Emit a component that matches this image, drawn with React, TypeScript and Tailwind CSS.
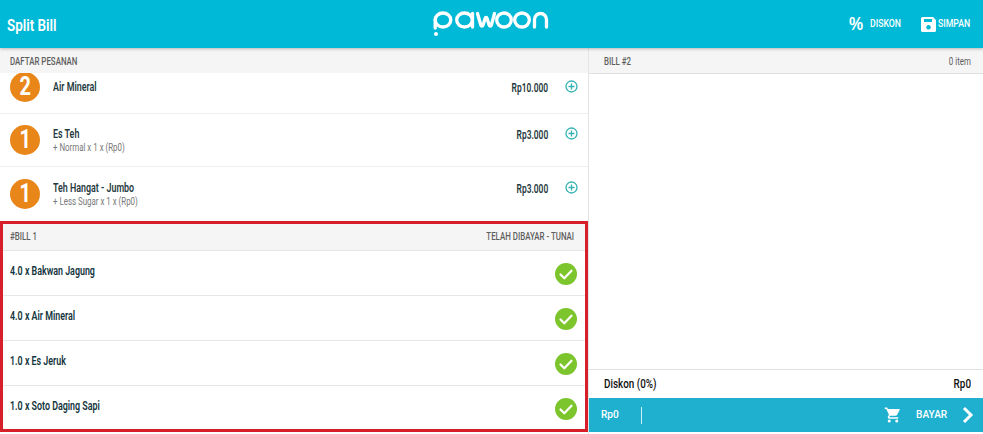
const font = "font-['Roboto',sans-serif]";
const sl = `${font} inline-block whitespace-nowrap origin-left scale-x-[0.79]`;
const sr = `${font} inline-block whitespace-nowrap origin-right scale-x-[0.79]`;
const bl = `${font} inline-block whitespace-nowrap origin-left scale-x-[0.74]`;
const br = `${font} inline-block whitespace-nowrap origin-right scale-x-[0.7]`;
const ul = `${font} inline-block whitespace-nowrap origin-left scale-x-[0.88]`;

function Logo() {
  return (
    <svg width="118" height="28" viewBox="0 0 118 28" fill="none" stroke="white" strokeWidth="3.3" strokeLinecap="round" strokeLinejoin="round" className="block ml-[7px]">
      <ellipse cx="10" cy="10" rx="7.8" ry="7" />
      <path d="M2.2 10v8" />
      <circle cx="3" cy="24" r="2" fill="white" stroke="none" />
      <ellipse cx="31.500" cy="10" rx="7.800" ry="7" />
      <path d="M39.500 3.500V17" />
      <path d="M44.500 3.500l3.300 11.500c.4 1.600 1.800 1.600 2.300 0l2-6.500c.4-1.400 1.600-1.400 2 0l2 6.500c.5 1.600 1.900 1.600 2.300 0L61.500 3.500" />
      <ellipse cx="71" cy="10" rx="7.300" ry="7" />
      <ellipse cx="89" cy="10" rx="7.300" ry="7" />
      <path d="M101.500 17V9.500a6 6 0 0 1 12 0V17" />
    </svg>
  );
}

function Plus() {
  return (
    <svg width="13" height="13" viewBox="0 0 13 13" fill="none" stroke="#35b3b3" strokeWidth="1.300" className="block">
      <circle cx="6.500" cy="6.500" r="5.500" />
      <path d="M6.500 3.500v6M3.500 6.500h6" />
    </svg>
  );
}

function Check() {
  return (
    <svg width="22" height="22" viewBox="0 0 22 22" fill="none" className="block mt-[2px]">
      <circle cx="11" cy="11" r="11" fill="#7cc52d" />
      <path d="M5.500 11.500l3.800 3.800 7.200-7.600" stroke="white" strokeWidth="2.200" strokeLinecap="round" strokeLinejoin="round" />
    </svg>
  );
}

function Order({ qty, name, note, price, h }: { qty: number; name: string; note?: string; price: string; h: string }) {
  return (
    <div className={`flex items-center pl-[10px] pr-[10px] border-b border-[#eeeeee] ${h}`}>
      <div className="w-[30px] h-[30px] rounded-full bg-[#e8861a] text-white flex items-center justify-center text-[25px] font-bold">
        <span className={`${font} inline-block scale-x-[0.8]`}>{qty}</span>
      </div>
      <div className="ml-[13px] flex-1">
        <div className="h-[13px] text-[12px] leading-[13px] font-semibold text-[#1f3a40]"><span className={bl}>{name}</span></div>
        {note && <div className="h-[13px] text-[10px] leading-[13px] mt-[1px] text-[#777777]"><span className={sl}>{note}</span></div>}
      </div>
      <div className={`flex items-center ${note ? "-mt-[14px]" : ""}`}>
        <span className={`${br} text-[12px] font-semibold text-[#1f3a40] mt-[3px]`}>{price}</span>
        <div className="ml-[17px]"><Plus /></div>
      </div>
    </div>
  );
}

function Paid({ text, h }: { text: string; h: string }) {
  return (
    <div className={`flex items-center justify-between pl-[7px] pr-[8px] border-b border-[#e6e6e6] last:border-b-0 ${h}`}>
      <span className={`${bl} text-[12px] font-semibold text-[#12343c] -mt-[4px]`}>{text}</span>
      <Check />
    </div>
  );
}

export default function App() {
  return (
    <div className="w-[983px] h-[434px] bg-white overflow-hidden flex flex-col">
      <header className="h-[48px] shrink-0 bg-[#00b9d6] shadow-[0_1px_3px_rgba(0,0,0,0.25)] relative z-10 flex items-center justify-between pl-[7px] pr-[14px]">
        <div className="w-[200px] text-white text-[17px] font-semibold mt-[2px]"><span className={`${sl} scale-x-[0.76]`}>Split Bill</span></div>
        <Logo />
        <div className="w-[200px] flex items-center justify-end text-white">
          <span className="w-[21px] text-[18px] leading-none font-bold font-['Liberation_Sans',sans-serif]"><span className="inline-block origin-left scale-x-[0.88]">%</span></span>
          <span className={`${sl} w-[51px] text-[11px] font-medium`}>DISKON</span>
          <svg width="15" height="15" viewBox="0 0 15 15" className="mr-[2px] block">
            <path fillRule="evenodd" fill="white" d="M1.500 0H12l3 3v10.500a1.500 1.500 0 0 1-1.500 1.500h-12A1.500 1.500 0 0 1 0 13.500v-12A1.500 1.500 0 0 1 1.500 0zM3 2v3h8V2zM7.500 8a2.300 2.300 0 1 0 .01 0z" />
          </svg>
          <span className={`${sl} w-[31px] text-[11px] font-medium`}>SIMPAN</span>
        </div>
      </header>
      <main className="flex flex-1 min-h-0">
        <section className="w-[589px] shrink-0 border-r border-[#e5e5e5] flex flex-col">
          <div className="h-[25px] shrink-0 bg-[#f5f5f5] flex items-center pl-[10px] pt-[2px] text-[10px] font-medium text-[#5e5e5e]"><span className={sl}>DAFTAR PESANAN</span></div>
          <div className="h-[148px] shrink-0 overflow-hidden">
            <div className="-mt-[13px]">
              <Order qty={2} name="Air Mineral" price="Rp10.000" h="h-[54px]" />
              <Order qty={1} name="Es Teh" note="+ Normal x 1 x (Rp0)" price="Rp3.000" h="h-[53px]" />
              <Order qty={1} name="Teh Hangat - Jumbo" note="+ Less Sugar x 1 x (Rp0)" price="Rp3.000" h="h-[54px] border-b-0" />
            </div>
          </div>
          <div className="h-[211px] shrink-0 border-[3px] border-[#d71f2a] flex flex-col">
            <div className="h-[27px] shrink-0 bg-[#f5f5f5] border-b border-[#e6e6e6] flex items-center justify-between pl-[7px] pr-[11px] pb-[1px] text-[10px] font-medium text-[#5e5e5e]">
              <span className={sl}>#BILL 1</span>
              <span className={sr}>TELAH DIBAYAR - TUNAI</span>
            </div>
            <Paid text="4.0 x Bakwan Jagung" h="h-[45px]" />
            <Paid text="4.0 x Air Mineral" h="h-[45px]" />
            <Paid text="1.0 x Es Jeruk" h="h-[45px]" />
            <Paid text="1.0 x Soto Daging Sapi" h="h-[43px]" />
          </div>
        </section>
        <section className="flex-1 flex flex-col">
          <div className="h-[26px] shrink-0 bg-[#f5f5f5] border-b border-[#e0e0e0] flex items-center justify-between pl-[15px] pr-[12px] pt-[2px] text-[10px] text-[#5e5e5e]">
            <span className={`${sl} font-medium`}>BILL #2</span>
            <span className={sr}>0 item</span>
          </div>
          <div className="flex-1" />
          <div className="h-[29px] shrink-0 border-t border-[#e0e0e0] flex items-center justify-between pl-[15px] pr-[12px] text-[12.500px] font-medium text-[#111111]">
            <span className={sl}>Diskon (0%)</span>
            <span className={sr}>Rp0</span>
          </div>
          <div className="h-[34px] shrink-0 bg-[#1fb0cf] flex items-center pl-[12px] pr-[9px] text-white">
            <span className={`${ul} w-[40px] text-[11.500px] font-medium`}>Rp0</span>
            <div className="w-px h-[17px] bg-white/80" />
            <div className="flex-1" />
            <svg width="18" height="18" viewBox="0 0 24 24" fill="white" className="block">
              <path d="M7 18a2 2 0 1 0 0 4 2 2 0 0 0 0-4zm10 0a2 2 0 1 0 0 4 2 2 0 0 0 0-4zM1 2v2h2l3.600 7.600-1.350 2.450C4.520 15.370 5.480 17 7 17h12v-2H7.420a.25.25 0 0 1-.25-.25l.03-.12.9-1.630h7.450c.75 0 1.410-.41 1.750-1.030l3.580-6.490A1 1 0 0 0 20 4H5.210l-.94-2z" />
            </svg>
            <span className={`${ul} ml-[14px] w-[33px] text-[11.500px] font-medium`}>BAYAR</span>
            <svg width="12" height="18" viewBox="0 0 12 18" fill="none" stroke="white" strokeWidth="3" className="ml-[13px] block">
              <path d="M2 2l7 7-7 7" />
            </svg>
          </div>
          <div className="h-[2px] shrink-0" />
        </section>
      </main>
    </div>
  );
}
